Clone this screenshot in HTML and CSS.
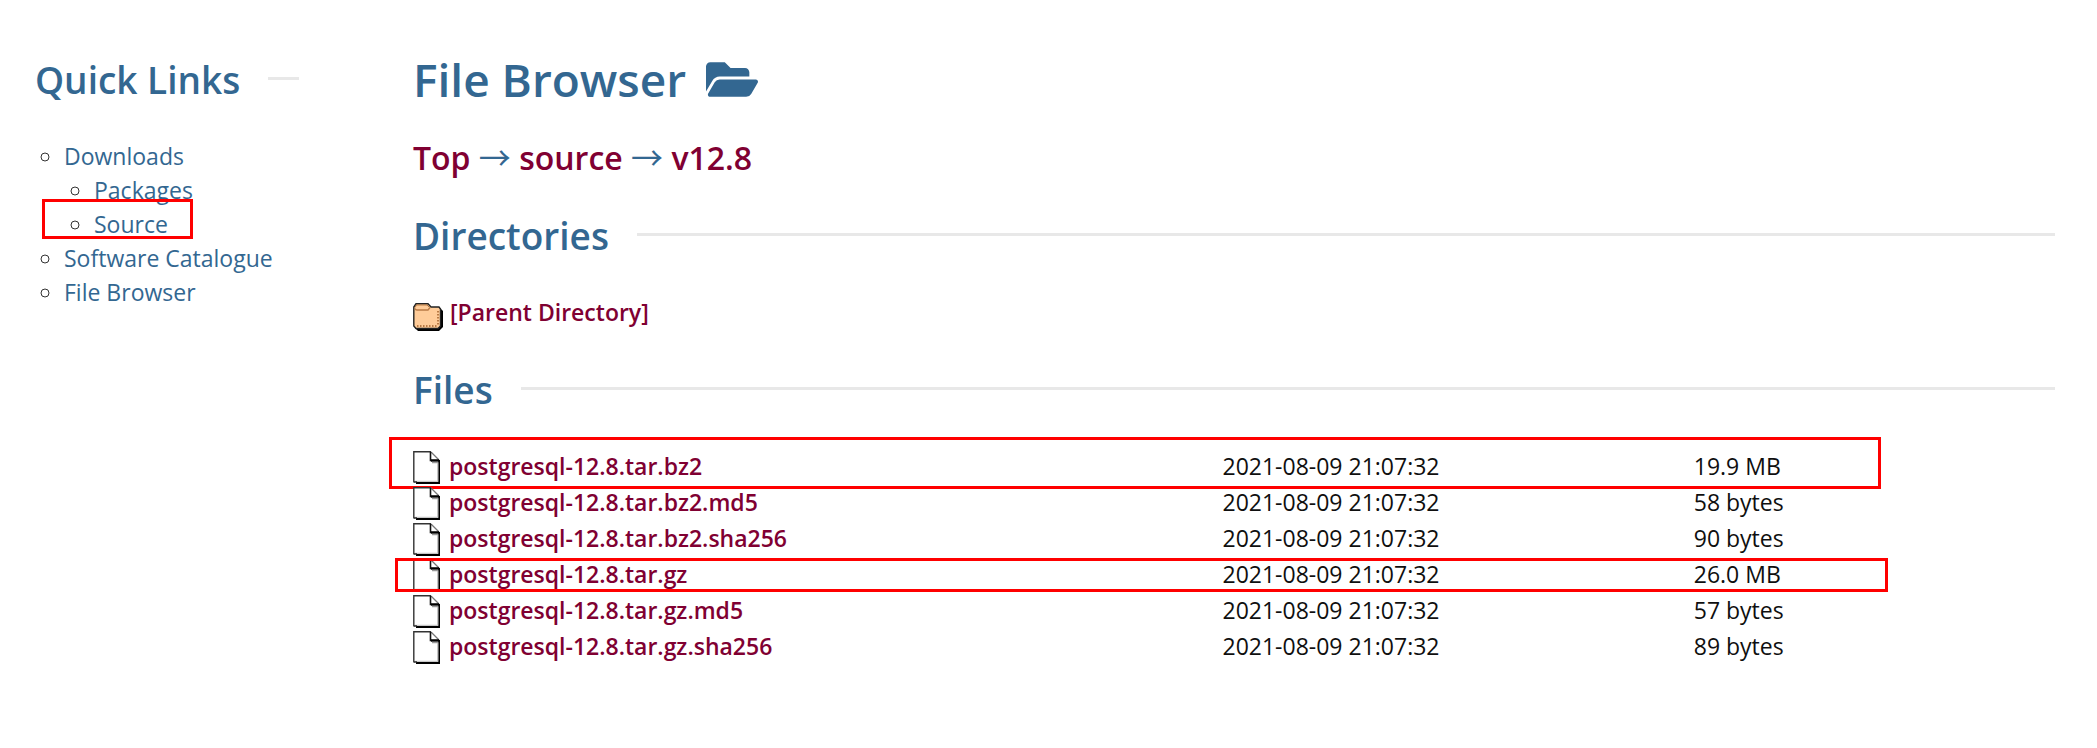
FILE: index.html
```html
<!DOCTYPE html>
<html lang="en">
<head>
<meta charset="utf-8">
<title>File Browser</title>
<link rel="stylesheet" href="styles.css">
</head>
<body>
<svg class="sprite" aria-hidden="true">
  <symbol id="icon-file" viewBox="0 0 27 33">
    <path d="M1 1h17l8 8v22H1z" fill="#fff"/>
    <path d="M.8 31.500V.8H18" fill="none" stroke="#333" stroke-width="1.400"/>
    <path d="M18 1l8 8" fill="none" stroke="#777" stroke-width="1.200"/>
    <path d="M17.500 1v8.500h8.500" fill="none" stroke="#111" stroke-width="1.600"/>
    <path d="M18 9.500h8" stroke="#000" stroke-width="2.400"/>
    <path d="M19 11.500h6" stroke="#999" stroke-width="1.500"/>
    <path d="M2 30.300h23" stroke="#bbb" stroke-width="1"/>
    <path d="M3 32h23.200V9" fill="none" stroke="#000" stroke-width="1.800"/>
    <path d="M1 31h3" stroke="#222" stroke-width="1.400"/>
    <path d="M24.700 12v18" stroke="#bbb" stroke-width="1"/>
  </symbol>
  <symbol id="icon-folder" viewBox="0 0 30 28">
    <path d="M2 25l3 3h21l4-4V8l-3-3z" fill="#000"/>
    <path d="M.8 4L3 .8h12L18 4h8l1.500 2v17L25 25.500H3L.8 23z" fill="#fc9" stroke="#222" stroke-width="1.400"/>
    <path d="M2 5.500Q2.500 7 4 7h11l2-2.500" fill="none" stroke="#b97a45" stroke-width="1.400"/>
    <path d="M2 4.500L3.500 2H14l2 2" fill="none" stroke="#b97a45" stroke-width="1"/>
    <path d="M4 23h21" fill="none" stroke="#b97a45" stroke-width="2" stroke-dasharray="1.500 1.500"/>
    <path d="M25 8v15" fill="none" stroke="#b97a45" stroke-width="2" stroke-dasharray="1.500 1.500"/>
  </symbol>
</svg>
<div class="page">
  <aside class="sidebar">
    <h2 class="section-title">Quick Links</h2>
    <ul class="links">
      <li><a href="#">Downloads</a>
        <ul>
          <li><a href="#">Packages</a></li>
          <li class="marked"><a href="#">Source</a><span class="mark mark-source"></span></li>
        </ul>
      </li>
      <li><a href="#">Software Catalogue</a></li>
      <li><a href="#">File Browser</a></li>
    </ul>
  </aside>
  <main>
    <h1 class="title">File Browser
      <svg class="title-icon" viewBox="0 0 576 384" aria-hidden="true"><path fill="currentColor" d="M572.700 228.100L500.300 352.200A64 64 0 0 1 445 384H45c-18.500 0-30-20-20.700-36.100L96.700 223.800A64 64 0 0 1 152 192h400c18.500 0 30 20 20.700 36.100zM152 160h328v-48c0-26.500-21.500-48-48-48H272L208 0H48C21.500 0 0 21.500 0 48v278.100l69-118.400C86.200 178.300 118 160 152 160z"/></svg>
    </h1>
    <nav class="crumbs"><a href="#">Top</a> <span class="arrow">→</span> <a href="#">source</a> <span class="arrow">→</span> <a href="#">v12.8</a></nav>
    <h2 class="section-title">Directories</h2>
    <p class="entry parent"><svg class="folder-icon" aria-hidden="true"><use href="#icon-folder"/></svg><a href="#">[Parent Directory]</a></p>
    <h2 class="section-title">Files</h2>
    <table class="files">
      <tbody>
        <tr><td><div class="entry"><svg class="file-icon" aria-hidden="true"><use href="#icon-file"/></svg><a href="#">postgresql-12.8.tar.bz2</a></div><span class="mark mark-bz2"></span></td><td>2021-08-09 21:07:32</td><td>19.9 MB</td></tr>
        <tr><td><div class="entry"><svg class="file-icon" aria-hidden="true"><use href="#icon-file"/></svg><a href="#">postgresql-12.8.tar.bz2.md5</a></div></td><td>2021-08-09 21:07:32</td><td>58 bytes</td></tr>
        <tr><td><div class="entry"><svg class="file-icon" aria-hidden="true"><use href="#icon-file"/></svg><a href="#">postgresql-12.8.tar.bz2.sha256</a></div></td><td>2021-08-09 21:07:32</td><td>90 bytes</td></tr>
        <tr><td><div class="entry"><svg class="file-icon" aria-hidden="true"><use href="#icon-file"/></svg><a href="#">postgresql-12.8.tar.gz</a></div><span class="mark mark-gz"></span></td><td>2021-08-09 21:07:32</td><td>26.0 MB</td></tr>
        <tr><td><div class="entry"><svg class="file-icon" aria-hidden="true"><use href="#icon-file"/></svg><a href="#">postgresql-12.8.tar.gz.md5</a></div></td><td>2021-08-09 21:07:32</td><td>57 bytes</td></tr>
        <tr><td><div class="entry"><svg class="file-icon" aria-hidden="true"><use href="#icon-file"/></svg><a href="#">postgresql-12.8.tar.gz.sha256</a></div></td><td>2021-08-09 21:07:32</td><td>89 bytes</td></tr>
      </tbody>
    </table>
  </main>
</div>
</body>
</html>
```

FILE: styles.css
```css
* { box-sizing: border-box; }
body {
  margin: 0;
  background: #fff;
  color: #0f0f0f;
  font: 400 23px/34px "Open Sans", sans-serif;
}
h1, h2, p, ul { margin: 0; padding: 0; }
a { color: #800032; text-decoration: none; }
.sprite { display: none; }
.page {
  display: grid;
  grid-template-columns: 264px minmax(0, 1fr);
  column-gap: 114px;
  padding: 52px 42px 72px 35px;
}
.section-title {
  display: flex;
  align-items: center;
  gap: 28px;
  color: #336791;
  font-size: 37px;
  font-weight: 600;
  line-height: 56px;
}
.section-title::after {
  content: "";
  flex: 1;
  height: 3px;
  margin-bottom: 4px;
  background: #e8e8e8;
}
.links { list-style: circle; padding-left: 29px; margin-top: 31px; }
.links ul { list-style: circle; padding-left: 30px; }
.links a { color: #336791; }
.links li::marker { color: #333; }
.title {
  display: flex;
  align-items: center;
  gap: 20px;
  color: #336791;
  font-size: 46px;
  font-weight: 600;
  line-height: 54px;
}
.title-icon { width: 52px; height: 35px; }
.crumbs {
  margin: 28px 0 26px;
  color: #336791;
  font-size: 32px;
  font-weight: 600;
  line-height: 48px;
}
.arrow { font-family: "Noto Sans CJK SC", sans-serif; font-weight: 400; line-height: 1; }
.entry { display: flex; gap: 9px; font-weight: 600; }
.entry a { line-height: 34px; }
.folder-icon { width: 30px; height: 28px; margin-top: 8px; }
.parent { gap: 7px; margin: 31px 0; }
.file-icon { width: 27px; height: 33px; margin-top: 2px; }
.files {
  width: 100%;
  margin-top: 31px;
  border-collapse: collapse;
  table-layout: fixed;
}
.files tr { position: relative; }
.files td { padding: 0; height: 36px; vertical-align: top; }
.files td:nth-child(1) { width: 49.3%; }
.files td:nth-child(2) { width: 28.7%; }
.marked { position: relative; }
.mark { position: absolute; border: 3px solid #f00; pointer-events: none; }
.mark-source { left: -52px; top: -8px; width: 151px; height: 40px; }
.mark-bz2 { left: -24px; right: 174px; top: -12px; height: 52px; }
.mark-gz { left: -18px; right: 167px; top: 1px; height: 34px; }
```
